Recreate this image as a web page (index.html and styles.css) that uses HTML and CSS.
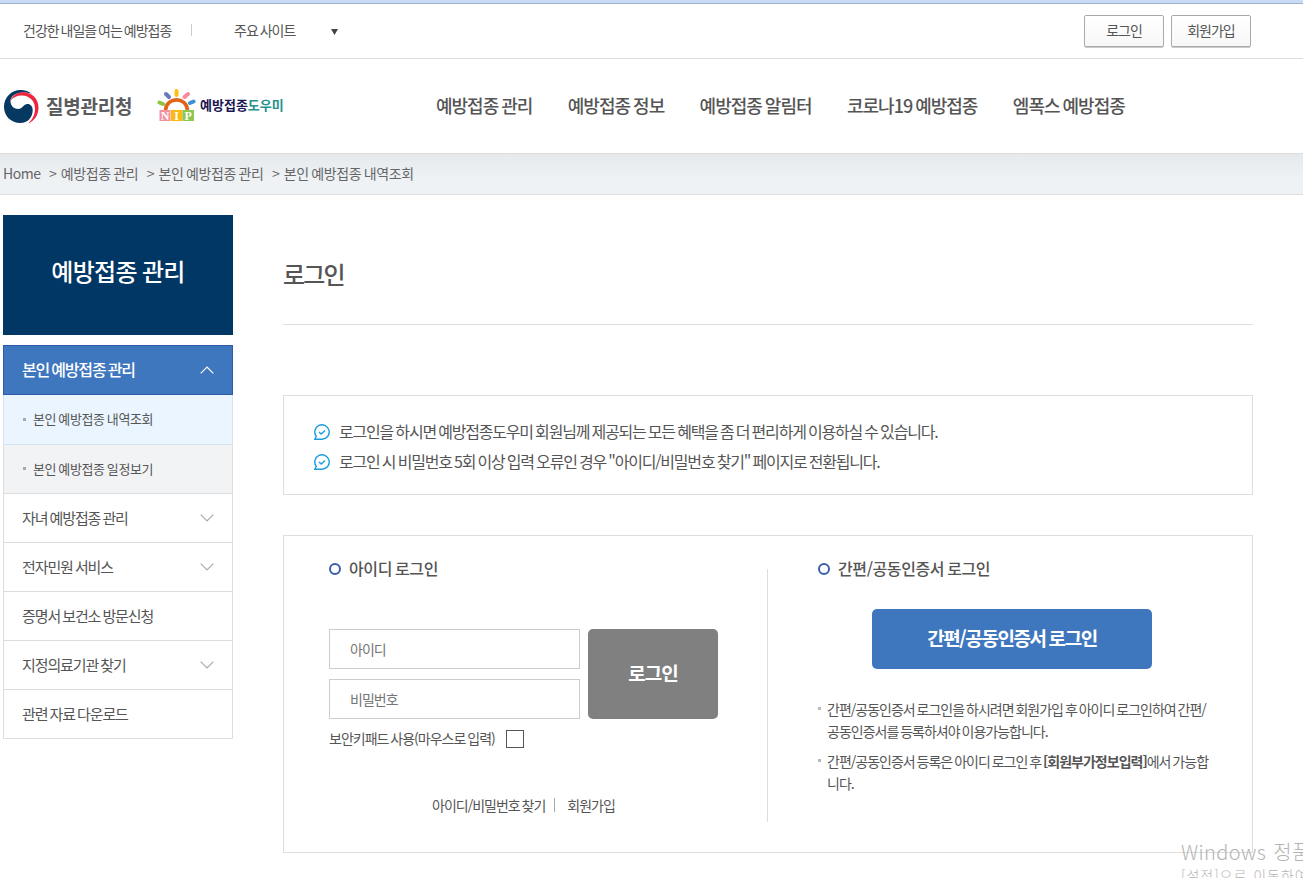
FILE: index.html
```
<!DOCTYPE html>
<html lang="ko">
<head>
    <meta charset="UTF-8">
    <meta name="viewport" content="width=device-width, initial-scale=1.0">
    <title>로그인 | 예방접종도우미</title>
    <link rel="stylesheet" href="styles.css">
</head>
<body>
    <div class="topbar">
        <span class="slogan">건강한 내일을 여는 예방접종</span>
        <a class="site-link">주요 사이트 <svg width="7" height="6" viewBox="0 0 7 6"><path d="M0 0h7L3.500 6z" fill="#444"/></svg></a>
        <div class="util">
            <a class="util-btn">로그인</a>
            <a class="util-btn">회원가입</a>
        </div>
    </div>

    <header class="header">
        <a class="logo-kdca">
            <svg width="35" height="34" viewBox="0 0 35 34">
                <path d="M28 4C24 .8 20 0 17 0C7 0 0 7.500 0 17C0 26 7 33 16.500 33C23.500 33 28.500 27.500 28.700 20.500C28.800 16.500 26.500 14 23.500 14C19.500 14 18.500 19 14 19C9.500 19 6 15 6.500 10C8 5 13 3 18 2.600C22 2.300 25 2.800 28 4Z" fill="#053961"/>
                <path d="M6.500 11C8 5.500 13 2.600 18 2.200C27 1.500 34.500 8 34.500 17.500C34.500 25 30.500 31 24 33.500C28.500 29.500 31 25 31 18.500C31 11 25.500 5.800 18 5.600C13 5.500 9 7.500 6.500 11Z" fill="#ef2540"/>
            </svg>
            <span>질병관리청</span>
        </a>
        <a class="logo-nip">
            <svg width="39" height="34" viewBox="0 0 39 34">
                <g stroke-width="4" stroke-linecap="round">
                    <path d="M2.500 13.500l3.500 1.500" stroke="#8dc63f"/>
                    <path d="M9 5l3 3" stroke="#6a78c0"/>
                    <path d="M19.500 2v4" stroke="#fdc010"/>
                    <path d="M31 5l-3.500 3" stroke="#f48a9c"/>
                    <path d="M36.500 12.500l-3.500 1.500" stroke="#3f8fd8"/>
                </g>
                <path d="M8.500 21C9.500 7.500 29.500 7.500 30.500 21" fill="none" stroke="#e0651b" stroke-width="3.600"/>
                <path d="M2.500 21h11v11h-11z" fill="#f3919f"/>
                <path d="M14 21h11.500v11H14z" fill="#fdb913"/>
                <path d="M25.500 21h11.500v11H25.500z" fill="#8cc751"/>
                <g class="nip-text">
                    <text x="8" y="31">N</text>
                    <text x="19.700" y="31">I</text>
                    <text x="31.200" y="31">P</text>
                </g>
            </svg>
            <span>예방접종<em>도우미</em></span>
        </a>
        <nav class="gnb">
            <a>예방접종 관리</a>
            <a>예방접종 정보</a>
            <a>예방접종 알림터</a>
            <a>코로나19 예방접종</a>
            <a>엠폭스 예방접종</a>
        </nav>
    </header>

    <div class="location">
        <span class="home">Home</span>
        <span class="depth">예방접종 관리</span>
        <span class="depth">본인 예방접종 관리</span>
        <span class="depth">본인 예방접종 내역조회</span>
    </div>

    <div class="container">
        <aside class="side">
            <h2>예방접종 관리</h2>
            <ul class="lnb">
                <li class="on">본인 예방접종 관리 <svg width="14" height="8" viewBox="0 0 14 8"><path d="M.7 7.300L7 1l6.300 6.300"/></svg></li>
                <li class="sub current">본인 예방접종 내역조회</li>
                <li class="sub">본인 예방접종 일정보기</li>
                <li>자녀 예방접종 관리 <svg width="14" height="8" viewBox="0 0 14 8"><path d="M.7.700L7 7l6.300-6.300"/></svg></li>
                <li>전자민원 서비스 <svg width="14" height="8" viewBox="0 0 14 8"><path d="M.7.700L7 7l6.300-6.300"/></svg></li>
                <li>증명서 보건소 방문신청</li>
                <li>지정의료기관 찾기 <svg width="14" height="8" viewBox="0 0 14 8"><path d="M.7.700L7 7l6.300-6.300"/></svg></li>
                <li>관련 자료 다운로드</li>
            </ul>
        </aside>

        <main class="content">
            <h1>로그인</h1>

            <ul class="notice">
                <li>
                    <svg width="16" height="16" viewBox="0 0 16 16"><path d="M.8 15.200H8A7.200 7.200 0 1 0 2.300 12.400Z"/><path d="M5 8l2.200 2.100L11 6.500"/></svg>
                    <span>로그인을 하시면 예방접종도우미 회원님께 제공되는 모든 혜택을 좀 더 편리하게 이용하실 수 있습니다.</span>
                </li>
                <li>
                    <svg width="16" height="16" viewBox="0 0 16 16"><path d="M.8 15.200H8A7.200 7.200 0 1 0 2.300 12.400Z"/><path d="M5 8l2.200 2.100L11 6.500"/></svg>
                    <span>로그인 시 비밀번호 5회 이상 입력 오류인 경우 "아이디/비밀번호 찾기" 페이지로 전환됩니다.</span>
                </li>
            </ul>

            <div class="login-box">
                <section class="login-id">
                    <h3>아이디 로그인</h3>
                    <form class="login-form">
                        <div class="fields">
                            <input type="text" placeholder="아이디">
                            <input type="password" placeholder="비밀번호">
                        </div>
                        <button type="button" class="btn-login">로그인</button>
                    </form>
                    <label class="keypad"><span>보안키패드 사용(마우스로 입력)</span> <input type="checkbox"></label>
                    <div class="links">
                        <a>아이디/비밀번호 찾기</a>
                        <a>회원가입</a>
                    </div>
                </section>
                <section class="login-cert">
                    <h3>간편/공동인증서 로그인</h3>
                    <button type="button" class="btn-cert">간편/공동인증서 로그인</button>
                    <ul class="guide">
                        <li><p>간편/공동인증서 로그인을 하시려면 회원가입 후 아이디 로그인하여 간편/<br>공동인증서를 등록하셔야 이용가능합니다.</p></li>
                        <li><p>간편/공동인증서 등록은 아이디 로그인 후 <b>[회원부가정보입력]</b>에서 가능합<br>니다.</p></li>
                    </ul>
                </section>
            </div>
        </main>
    </div>

    <div class="watermark">
        <p>Windows 정품 인증</p>
        <p class="small">[설정]으로 이동하여</p>
    </div>
</body>
</html>
```
FILE: styles.css
```
*, *::before {
    box-sizing: border-box;
    margin: 0;
    padding: 0;
}
body {
    height: 878px;
    overflow: hidden;
    background: #fff;
    color: #555;
    font-family: "Noto Sans CJK KR", sans-serif;
    font-size: 14px;
    letter-spacing: -1px;
    line-height: 20px;
    white-space: nowrap;
    word-spacing: -1px;
}
ul {
    list-style: none;
}
svg {
    flex: none;
}
input, button {
    font-family: inherit;
    letter-spacing: inherit;
    word-spacing: inherit;
}

/* top */
.topbar {
    display: flex;
    align-items: center;
    height: 59px;
    padding: 0 52px 2px 23px;
    border-top: 3px solid #c9dbf7;
    border-bottom: 1px solid #ddd;
    box-shadow: inset 0 1px #a2b2ca;
}
.slogan {
    width: 169px;
    margin-right: 42px;
    background: linear-gradient(#ccc, #ccc) right 4px / 1px 12px no-repeat;
}
.site-link {
    display: flex;
    align-items: center;
    justify-content: space-between;
    width: 104px;
}
.site-link svg {
    margin-top: 4px;
}
.util {
    display: flex;
    gap: 7px;
    margin: 2px 0 0 auto;
}
.util-btn {
    width: 80px;
    height: 32px;
    border: 1px solid #aaa;
    border-radius: 2px;
    background: linear-gradient(#fff, #f7f7f7);
    box-shadow: 0 1px #ccc;
    line-height: 29px;
    text-align: center;
}
.header {
    display: flex;
    align-items: center;
    height: 95px;
    padding-left: 4px;
    border-bottom: 1px solid #ddd;
}
.logo-kdca, .logo-nip {
    display: flex;
    align-items: center;
    font-weight: bold;
}
.logo-kdca {
    gap: 7px;
    width: 153px;
    color: #5b5c5e;
    font-size: 19px;
    letter-spacing: -0.2px;
}
.logo-kdca svg {
    margin-top: 1px;
}
.logo-nip {
    gap: 4px;
    width: 279px;
    color: #1c1552;
    font-size: 13px;
    letter-spacing: 0;
}
.logo-nip span {
    margin-top: -2px;
}
.logo-nip em {
    color: #27918f;
    font-style: normal;
}
.nip-text {
    fill: #fff;
    font: bold 12px "Liberation Serif", serif;
    text-anchor: middle;
}
.gnb {
    display: flex;
    gap: 35.4px;
    margin-top: -2px;
    font-size: 18px;
    font-weight: 500;
}
.location {
    display: flex;
    gap: 8.5px;
    height: 41px;
    padding-left: 3px;
    border-bottom: 1px solid #ddd;
    background: linear-gradient(#e5e9ec, #eef2f5 60%);
    color: #666;
    letter-spacing: -0.4px;
    line-height: 39px;
}
.home {
    letter-spacing: -0.5px;
}
.depth::before {
    content: ">";
    margin-right: 4.5px;
}

/* left menu */
.container {
    display: flex;
    gap: 50px;
    padding: 20px 0 0 3px;
}
.side {
    width: 230px;
}
.side h2 {
    height: 120px;
    margin-bottom: 10px;
    background: #003764;
    color: #fff;
    font-size: 24px;
    font-weight: 500;
    letter-spacing: -0.7px;
    line-height: 112px;
    text-align: center;
}
.lnb li {
    display: flex;
    align-items: center;
    justify-content: space-between;
    height: 49px;
    padding: 0 18px;
    border: 1px solid #ddd;
    border-top: 0;
    font-size: 15px;
    letter-spacing: -1.1px;
}
.lnb svg {
    fill: none;
    stroke: #aaa;
    stroke-width: 1.2;
}
.lnb .on {
    height: 50px;
    padding-bottom: 2px;
    border: 1px solid #2f58a9;
    background: #3f77bf;
    color: #fff;
    font-size: 16px;
    font-weight: 500;
    letter-spacing: -1.2px;
}
.lnb .on svg {
    margin-top: 2px;
    stroke: #fff;
}
.lnb .sub {
    justify-content: flex-start;
    gap: 8px;
    padding-bottom: 1px;
    background: #f2f3f5;
    font-size: 13px;
    letter-spacing: -0.4px;
}
.lnb .current {
    height: 50px;
    border-color: #d5e3ee;
    background: #eaf5ff;
}
.lnb .sub::before, .guide li::before {
    content: "";
    flex: none;
    width: 3px;
    height: 3px;
    margin-left: 1px;
    margin-right: -1px;
    background: #aaa;
}

/* content */
.content {
    width: 970px;
}
.content h1 {
    height: 110px;
    margin-bottom: 70px;
    border-bottom: 1px solid #ddd;
    font-size: 24px;
    font-weight: 500;
    letter-spacing: -1.8px;
    line-height: 118px;
}
.notice {
    height: 100px;
    margin-bottom: 40px;
    padding: 21px 30px;
    border: 1px solid #ddd;
    font-size: 16px;
    letter-spacing: -1.2px;
    line-height: 30px;
}
.notice li {
    display: flex;
    align-items: center;
    gap: 9px;
    height: 30px;
}
.notice span {
    margin-top: -2px;
}
.notice svg {
    fill: none;
    stroke: #1a9de0;
    stroke-width: 1.4;
}
.login-box {
    display: flex;
    height: 318px;
    padding: 0 20px 0 45px;
    border: 1px solid #ddd;
    background: linear-gradient(#ddd, #ddd) 483px 33px / 1px 253px no-repeat;
}
.login-id {
    flex: none;
    width: 489px;
}
.login-box h3 {
    display: flex;
    align-items: center;
    gap: 8px;
    margin-top: 22px;
    font-size: 16px;
    font-weight: 500;
    letter-spacing: -0.4px;
}
.login-box h3::before {
    content: "";
    width: 12px;
    height: 12px;
    margin-top: 2px;
    border: 2px solid #3a5fa8;
    border-radius: 50%;
}
.login-form {
    display: flex;
    gap: 8px;
    margin-top: 51px;
}
.fields {
    display: grid;
    gap: 10px;
}
.fields input {
    width: 251px;
    height: 40px;
    padding-left: 20px;
    border: 1px solid #ccc;
    font-size: 14px;
}
.fields input::placeholder {
    color: #757575;
}
.btn-login, .btn-cert {
    padding-bottom: 3px;
    border: 0;
    border-radius: 5px;
    color: #fff;
    font-size: 19px;
    font-weight: bold;
}
.btn-login {
    width: 130px;
    height: 90px;
    background: #808080;
}
.keypad {
    display: flex;
    align-items: center;
    gap: 11px;
    margin-top: 11px;
}
.keypad span {
    margin-top: -2px;
}
.keypad input {
    appearance: none;
    width: 18px;
    height: 18px;
    border: 1px solid #555;
}
.links {
    display: flex;
    margin: 47px 0 0 103px;
}
.links a + a {
    margin-left: 9px;
    padding-left: 13px;
    background: linear-gradient(#aaa, #aaa) 0 3px / 1px 14px no-repeat;
}
.btn-cert {
    display: block;
    width: 280px;
    height: 60px;
    margin: 31px 0 29px 54px;
    background: #3f77bf;
    letter-spacing: -1.4px;
}
.guide li {
    display: flex;
    gap: 7px;
    margin-bottom: 8px;
    line-height: 22px;
}
.guide li::before {
    margin: 9px -1px 0 0;
    background: #bbb;
}

/* activation overlay on the desktop */
.watermark {
    position: absolute;
    top: 839px;
    left: 1181px;
    width: 122px;
    height: 39px;
    overflow: hidden;
    color: #b4b4b4;
    font-size: 20px;
    font-weight: 300;
    letter-spacing: 0.4px;
    line-height: 26px;
    word-spacing: 1px;
}
.watermark .small {
    font-size: 14px;
    letter-spacing: 1px;
    line-height: 20px;
}
```
